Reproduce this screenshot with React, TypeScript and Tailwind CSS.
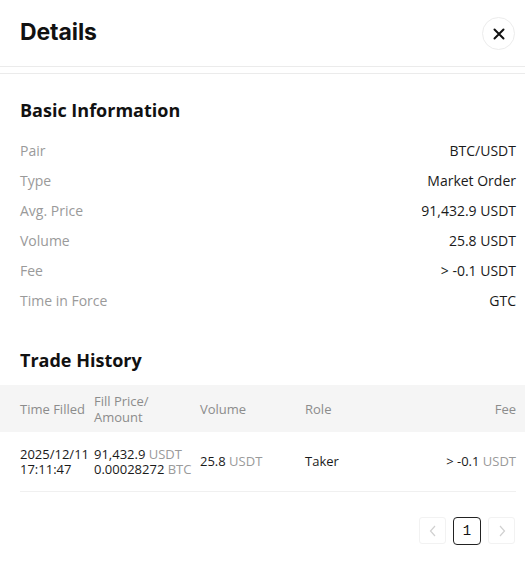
import React from "react";

const body = { fontFamily: '"Open Sans", "Noto Sans", sans-serif' };

const info: [string, string][] = [
  ["Pair", "BTC/USDT"],
  ["Type", "Market Order"],
  ["Avg. Price", "91,432.9 USDT"],
  ["Volume", "25.8 USDT"],
  ["Fee", "> -0.1 USDT"],
  ["Time in Force", "GTC"],
];

function Chevron({ dir }: { dir: "left" | "right" }) {
  return (
    <svg width="8" height="12" viewBox="0 0 8 12" fill="none">
      <path
        d={dir === "left" ? "M6 1L1.5 6L6 11" : "M2 1L6.5 6L2 11"}
        stroke="#d0d0d0"
        strokeWidth="1.2"
      />
    </svg>
  );
}

export default function App() {
  return (
    <div className="w-[525px] h-[563px] bg-white text-[#1a1a1a] overflow-hidden" style={body}>
      {/* header */}
      <div className="h-[67px] flex items-center justify-between pl-5 pr-[10px] border-b border-[#ebebeb]">
        <h1
          className="text-[23px] font-bold tracking-[-0.1px] text-[#111] pb-[1px]"
          style={{ fontFamily: "Inter, sans-serif" }}
        >
          Details
        </h1>
        <button className="w-[33px] h-[33px] rounded-full border border-[#ececec] flex items-center justify-center mt-[1px]">
          <svg width="12" height="12" viewBox="0 0 12 12">
            <path d="M1.5 1.5L10.5 10.5M10.5 1.5L1.5 10.5" stroke="#111" strokeWidth="2" strokeLinecap="round" />
          </svg>
        </button>
      </div>
      <div className="mt-[6px] border-t border-[#ebebeb]" />

      {/* basic information */}
      <div className="pl-5 pr-[9px] pt-[23px]">
        <h2 className="text-[18px] font-bold leading-[26px] text-[#111]">Basic Information</h2>
        <div className="mt-[12px] flex flex-col">
          {info.map(([k, v]) => (
            <div key={k} className="flex justify-between items-center h-[30px] text-[14px]">
              <span className="text-[#9a9a9a]">{k}</span>
              <span className="text-[#1a1a1a]">{v}</span>
            </div>
          ))}
        </div>
        <h2 className="mt-[32px] text-[18px] font-bold leading-[26px] text-[#111]">Trade History</h2>
      </div>

      {/* trade table */}
      <div className="mt-[12px] h-[47px] bg-[#f5f5f5] flex items-center pl-5 pr-[9px] text-[13px] leading-[16px] text-[#8c8c8c]">
        <div className="w-[74px]">Time Filled</div>
        <div className="w-[106px]">
          Fill Price/
          <br />
          Amount
        </div>
        <div className="w-[105px]">Volume</div>
        <div className="flex-1">Role</div>
        <div>Fee</div>
      </div>
      <div className="ml-5 mr-[9px] h-[60px] flex items-center border-b border-[#f0f0f0] text-[13px] leading-[14.5px]">
        <div className="w-[74px]">
          2025/12/11
          <br />
          17:11:47
        </div>
        <div className="w-[106px]">
          91,432.9 <span className="text-[#9a9a9a]">USDT</span>
          <br />
          0.00028272 <span className="text-[#9a9a9a]">BTC</span>
        </div>
        <div className="w-[105px]">
          25.8 <span className="text-[#9a9a9a]">USDT</span>
        </div>
        <div className="flex-1">Taker</div>
        <div>
          &gt; -0.1 <span className="text-[#9a9a9a]">USDT</span>
        </div>
      </div>

      {/* pagination */}
      <div className="flex justify-end gap-[7px] pr-[10px] mt-[25px]">
        <div className="w-[27px] h-[27px] rounded-[3px] border border-[#f2f2f2] flex items-center justify-center">
          <Chevron dir="left" />
        </div>
        <div
          className="w-[28px] h-[28px] rounded-[4px] border border-[#222] flex items-center justify-center text-[14px] text-[#111]"
          style={{ fontFamily: '"Liberation Mono", monospace' }}
        >
          1
        </div>
        <div className="w-[27px] h-[27px] rounded-[3px] border border-[#f2f2f2] flex items-center justify-center">
          <Chevron dir="right" />
        </div>
      </div>
    </div>
  );
}
